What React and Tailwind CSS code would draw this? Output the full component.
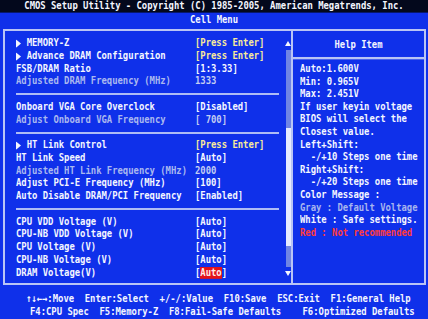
import React from "react";

const rows = [
  { arrow: true, label: "MEMORY-Z", value: "[Press Enter]", tone: "yellow" },
  { arrow: true, label: "Advance DRAM Configuration", value: "[Press Enter]", tone: "yellow" },
  { label: "FSB/DRAM Ratio", value: "[1:3.33]" },
  { label: "Adjusted DRAM Frequency (MHz)", value: "1333", dim: true },
  { sep: true },
  { label: "Onboard VGA Core Overclock", value: "[Disabled]" },
  { label: "Adjust Onboard VGA Frequency", value: "[ 700]", dim: true },
  { sep: true },
  { arrow: true, label: "HT Link Control", value: "[Press Enter]", tone: "yellow" },
  { label: "HT Link Speed", value: "[Auto]" },
  { label: "Adjusted HT Link Frequency (MHz)", value: "2000", dim: true },
  { label: "Adjust PCI-E Frequency (MHz)", value: "[100]" },
  { label: "Auto Disable DRAM/PCI Frequency", value: "[Enabled]" },
  { sep: true },
  { label: "CPU VDD Voltage (V)", value: "[Auto]" },
  { label: "CPU-NB VDD Voltage (V)", value: "[Auto]" },
  { label: "CPU Voltage (V)", value: "[Auto]" },
  { label: "CPU-NB Voltage (V)", value: "[Auto]" },
  { label: "DRAM Voltage(V)", value: "[Auto]", selected: true },
];

const help = [
  { text: "Auto:1.600V" },
  { text: "Min: 0.965V" },
  { text: "Max: 2.451V" },
  { text: "If user keyin voltage" },
  { text: "BIOS will select the" },
  { text: "Closest value." },
  { text: "Left+Shift:" },
  { text: "  -/+10 Steps one time" },
  { text: "Right+Shift:" },
  { text: "  -/+20 Steps one time" },
  { text: "Color Message :" },
  { text: "Gray : Default Voltage", color: "text-[#a7b5ef]" },
  { text: "White : Safe settings.", color: "text-[#f4f6ff]" },
  { text: "Red : Not recommended", color: "text-[#ff3b3b]" },
];

function Arrow() {
  return (
    <span className="inline-flex w-[10.7px] items-center">
      <svg width="5" height="7" viewBox="0 0 5 7">
        <polygon points="0,0 5,3.5 0,7" fill="#f4f6ff" />
      </svg>
    </span>
  );
}

function Row({ row }) {
  if (row.sep) {
    return (
      <div className="h-[12.76px] flex items-center">
        <div className="h-[2px] w-[263px] bg-[#aebcf5]" />
      </div>
    );
  }
  const labelColor = row.dim ? "text-[#aab8ef]" : "text-[#f4f6ff]";
  let valueColor = "text-[#f4f6ff]";
  if (row.dim) valueColor = "text-[#c3ccf2]";
  if (row.tone === "yellow") valueColor = "text-[#f7ea9a]";
  return (
    <div className="h-[12.76px] flex items-center scale-y-[1.18] whitespace-pre">
      <div className={`w-[179px] flex items-center ${labelColor}`}>
        {row.arrow && <Arrow />}
        <span>{row.label}</span>
      </div>
      <div className={valueColor}>
        {row.selected ? (
          <span>
            [<span className="bg-[#e3121a] text-[#ffe9e9]">Auto</span>]
          </span>
        ) : (
          row.value
        )}
      </div>
    </div>
  );
}

export default function App() {
  return (
    <div className="w-[428px] h-[319px] overflow-hidden bg-[#0f30ea] text-[#f4f6ff] font-bold text-[8.9px] leading-[12.76px] font-['DejaVu_Sans_Mono','Liberation_Mono',monospace]">
      {/* title bar */}
      <div className="h-[12px] bg-[#03081c] flex items-center justify-center whitespace-pre scale-y-[1.1]">
        CMOS Setup Utility - Copyright (C) 1985-2005, American Megatrends, Inc.
      </div>
      <div className="h-[17px] flex items-center justify-center scale-y-[1.18]">Cell Menu</div>

      {/* main box */}
      <div className="ml-[3px] w-[423px] h-[256px] border-2 border-[#b9c4f5] flex">
        {/* settings list */}
        <div className="w-[286px] flex pl-[11px] pt-[6px]">
          <div className="flex-1 flex flex-col">
            {rows.map((row, i) => (
              <Row key={i} row={row} />
            ))}
          </div>
          {/* scroll bar */}
          <div className="w-[6px] flex flex-col items-center">
            <div className="h-[12.76px] flex items-center">
              <svg width="6" height="5" viewBox="0 0 6 5">
                <polygon points="3,0 6,5 0,5" fill="#f4f6ff" />
              </svg>
            </div>
            <div className="w-[5px] h-[217px] bg-[#7085e4] flex flex-col">
              <div className="h-[78px]" />
              <div className="h-[118px] bg-[#e6ebff]" />
            </div>
            <div className="h-[12.76px] flex items-center">
              <svg width="6" height="5" viewBox="0 0 6 5">
                <polygon points="0,0 6,0 3,5" fill="#f4f6ff" />
              </svg>
            </div>
          </div>
        </div>

        {/* help panel */}
        <div className="flex-1 border-l-2 border-[#b9c4f5] flex flex-col">
          <div className="h-[26px] border-b-2 border-[#b9c4f5] flex items-center justify-center pt-[2px] scale-y-[1.18]">
            Help Item
          </div>
          <div className="pl-[7px] pt-[6px] flex flex-col">
            {help.map((line, i) => (
              <div
                key={i}
                className={`h-[12.6px] flex items-center whitespace-pre scale-y-[1.18] ${line.color || "text-[#f4f6ff]"}`}
              >
                {line.text}
              </div>
            ))}
          </div>
        </div>
      </div>

      {/* key legend */}
      <div className="pt-[8px] flex flex-col whitespace-pre">
        <div className="h-[12.5px] pl-[26px] flex items-center scale-y-[1.18]">
          ↑↓←→:Move  Enter:Select  +/-/:Value  F10:Save  ESC:Exit  F1:General Help
        </div>
        <div className="h-[12.5px] pl-[30px] flex items-center scale-y-[1.18]">
          F4:CPU Spec  F5:Memory-Z  F8:Fail-Safe Defaults    F6:Optimized Defaults
        </div>
      </div>
    </div>
  );
}
